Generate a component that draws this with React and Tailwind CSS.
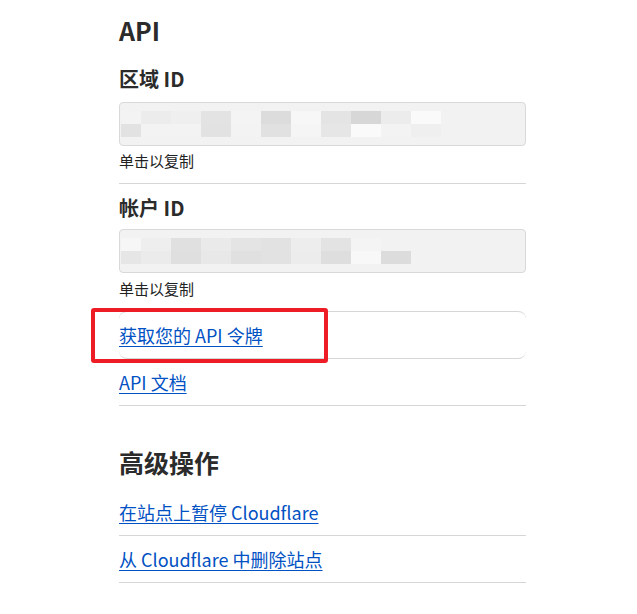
import React from "react";

const font = { fontFamily: '"Noto Sans CJK SC", "Noto Sans", sans-serif' };

const row1a = ["#f3f3f3", "#ececec", "#efefef", "#e3e3e3", "#f4f4f4", "#dcdcdc", "#f7f7f7", "#e4e4e4", "#d7d7d7", "#ececec", "#fafafa"];
const row1b = ["#e2e2e2", "#f3f3f3", "#f3f3f3", "#e2e2e2", "#f3f3f3", "#e1e1e1", "#f5f5f5", "#e6e6e6", "#fafafa", "#f3f3f3", "#efefef"];
const row2a = ["#f6f6f6", "#eeeeee", "#e0e0e0", "#eaeaea", "#e4e4e4", "#e2e2e2", "#ededed", "#e3e3e3", "#f4f4f4", "#f2f2f2"];
const row2b = ["#e6e6e6", "#ebebeb", "#dfdfdf", "#e8e8e8", "#e0e0e0", "#e2e2e2", "#ececec", "#dedede", "#f8f8f8", "#dcdcdc"];

const Blur = ({ a, b, first }) => (
  <div className="flex flex-col">
    <div className="flex h-[13px]">
      {a.map((c, i) => (
        <div key={i} className={i === 0 && first ? "w-[20px]" : "w-[30px]"} style={{ background: c }} />
      ))}
    </div>
    <div className="flex h-[13px]">
      {b.map((c, i) => (
        <div key={i} className={i === 0 && first ? "w-[20px]" : "w-[30px]"} style={{ background: c }} />
      ))}
    </div>
  </div>
);

const IdField = ({ children }) => (
  <div className="h-[44px] w-full rounded-[4px] border border-[#d9d9d9] bg-[#f2f2f2] flex items-center pl-px">
    {children}
  </div>
);

const LinkText = ({ children }) => (
  <a href="#" className="text-[18px] leading-[24px] text-[#0051c3] underline decoration-1 underline-offset-[3px]">
    {children}
  </a>
);

export default function App() {
  return (
    <div className="bg-white w-[637px] h-[614px] text-[#2b2b2b]" style={font}>
      <div className="ml-[119px] w-[407px] flex flex-col">
        <h2 className="mt-[14px] text-[25px] leading-[32px] font-bold">API</h2>

        <div className="flex flex-col border-b border-[#d6d6d6] pb-[12px]">
          <h3 className="mt-[19px] text-[20px] leading-[28px] font-bold">区域 ID</h3>
          <div className="mt-[9px]">
            <IdField>
              <Blur a={row1a} b={row1b} first />
            </IdField>
          </div>
          <p className="mt-[5px] text-[15px] leading-[20px] text-[#222]">单击以复制</p>
        </div>

        <div className="flex flex-col pb-[12px]">
          <h3 className="mt-[10px] text-[20px] leading-[28px] font-bold">帐户 ID</h3>
          <div className="mt-[7px]">
            <IdField>
              <Blur a={row2a} b={row2b} first />
            </IdField>
          </div>
          <p className="mt-[6px] text-[15px] leading-[20px] text-[#222]">单击以复制</p>
        </div>

        <div className="relative h-[48px] border-y border-[#d6d6d6] rounded-[8px] flex items-center">
          <LinkText>获取您的 API 令牌</LinkText>
          <div className="absolute left-[-28px] top-[-4px] w-[237px] h-[55px] border-[4px] border-[#ee1c25] rounded-[3px]" />
        </div>

        <div className="h-[47px] border-b border-[#d6d6d6] flex items-center">
          <LinkText>API 文档</LinkText>
        </div>

        <h2 className="mt-[40px] text-[25px] leading-[32px] font-bold">高级操作</h2>

        <div className="mt-[10px] h-[48px] border-b border-[#d6d6d6] flex items-center">
          <LinkText>在站点上暂停 Cloudflare</LinkText>
        </div>
        <div className="h-[47px] border-b border-[#d6d6d6] flex items-center">
          <LinkText>从 Cloudflare 中删除站点</LinkText>
        </div>
      </div>
    </div>
  );
}
